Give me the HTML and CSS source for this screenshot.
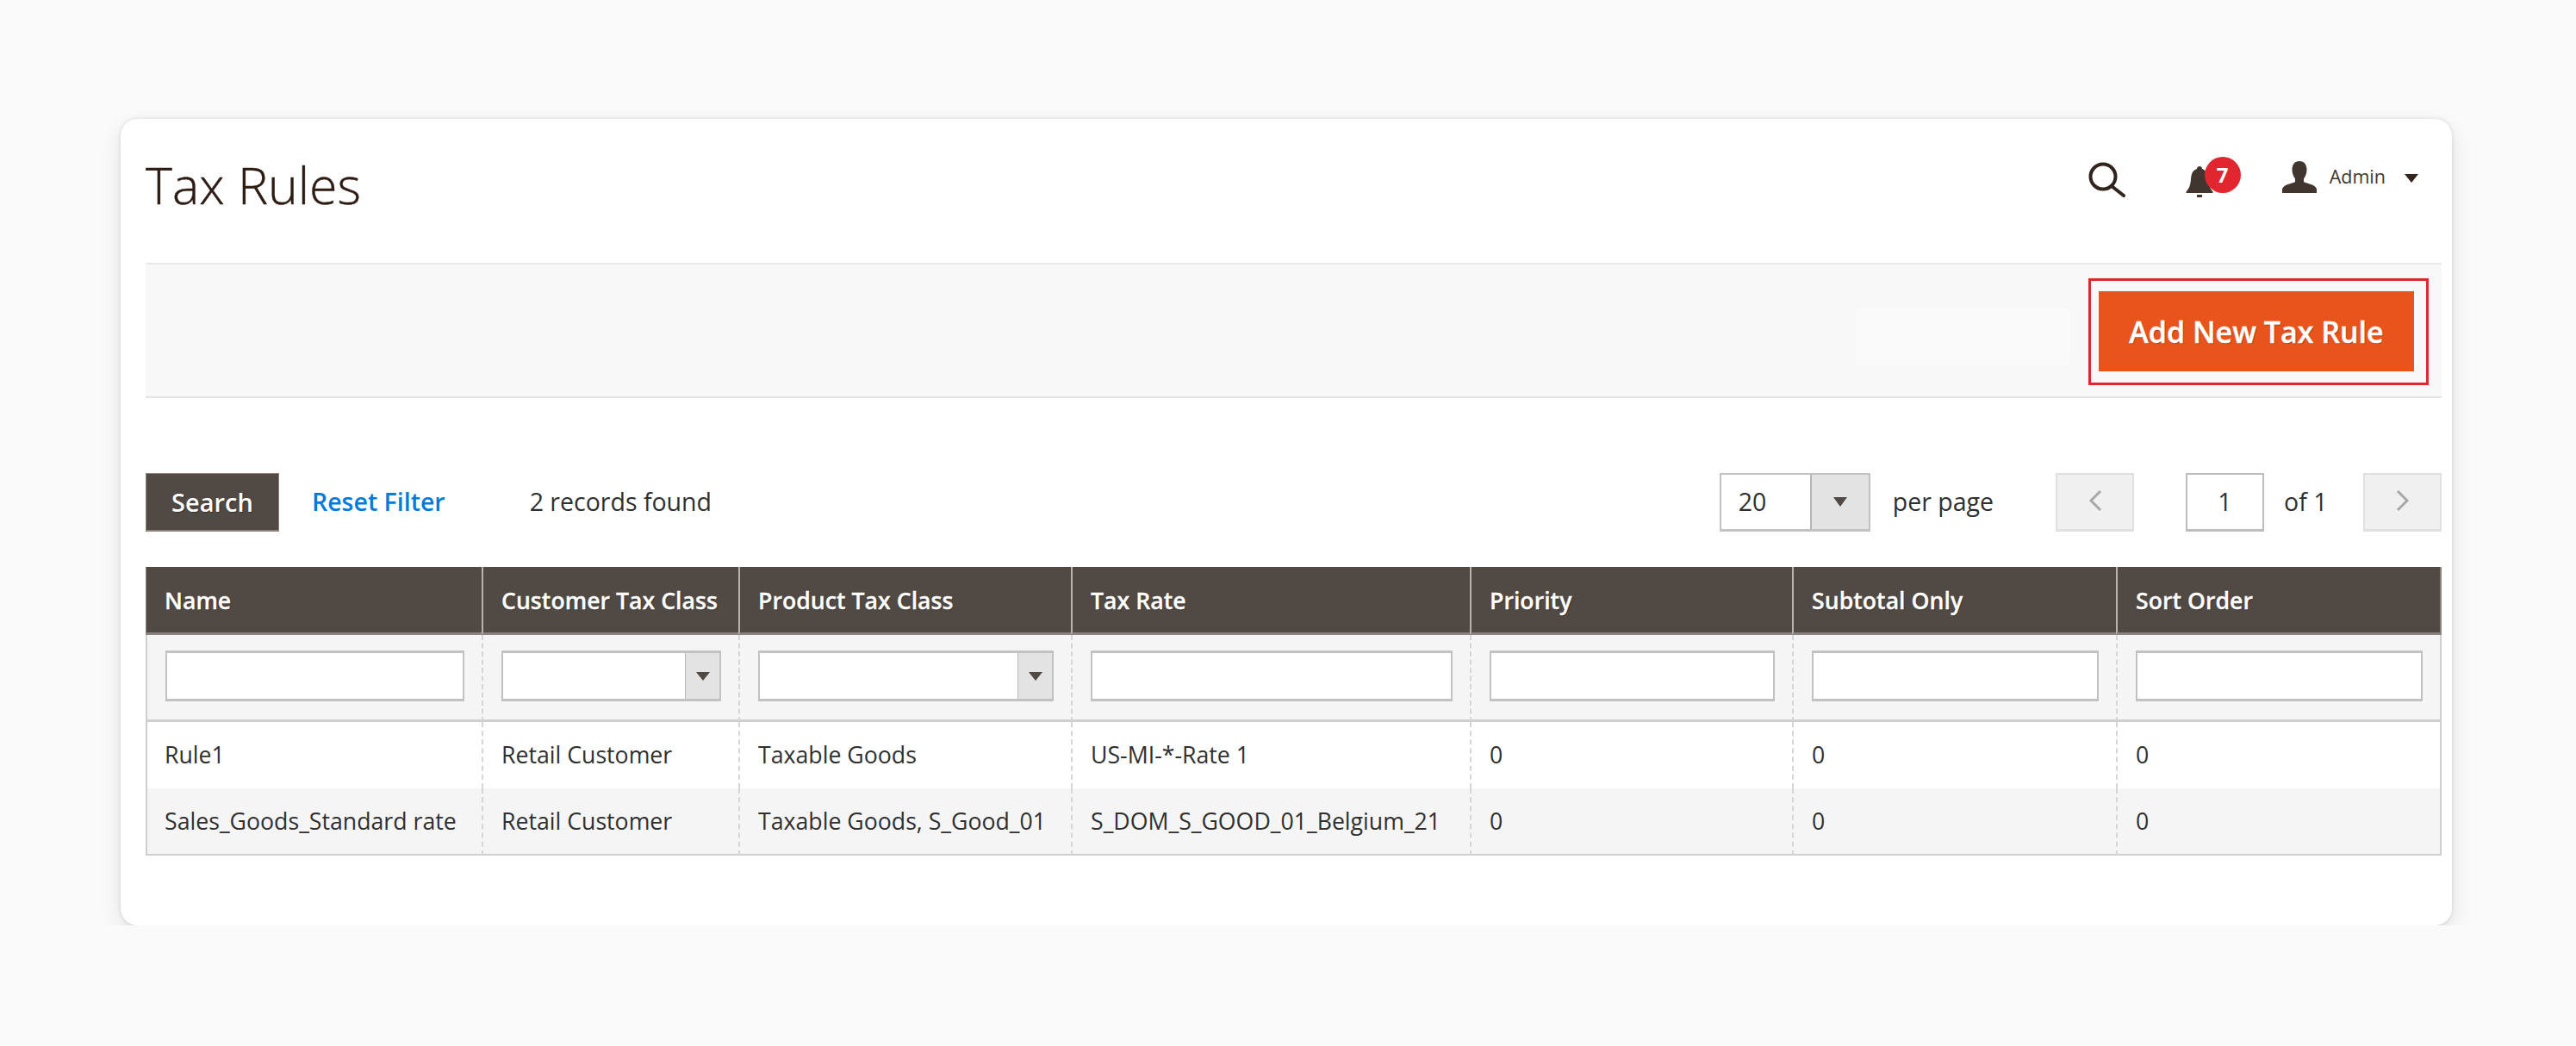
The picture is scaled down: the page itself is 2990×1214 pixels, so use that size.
FILE: index.html
```html
<!DOCTYPE html>
<html lang="en">
<head>
<meta charset="utf-8">
<title>Tax Rules</title>
<link rel="stylesheet" href="styles.css">
</head>
<body>
<main class="card">
  <header class="page-head">
    <h1 class="title">Tax Rules</h1>
    <div class="actions">
      <svg class="icon-search" viewBox="0 0 44 42" width="44" height="42"><circle cx="17" cy="18" r="14.5" fill="none" stroke="#2f241e" stroke-width="4"/><path d="M27 29 41 40" fill="none" stroke="#2f241e" stroke-width="4" stroke-linecap="round"/></svg>
      <div class="bell">
        <svg viewBox="0 0 32 36" width="32" height="36"><path d="M16 0c2 0 3 1.400 3 3 5 1.500 6.500 6 7 12 .5 6 1.500 10 5.500 14.500V31H.5v-1.500C4.500 25 5.500 21 6 15c.5-6 2-10.500 7-12 0-1.600 1-3 3-3Z" fill="#41362f"/><rect x="13" y="33" width="6" height="3" fill="#41362f"/></svg>
        <span class="badge">7</span>
      </div>
      <div class="user">
        <svg viewBox="0 0 40 37" width="40" height="37"><path d="M20 0c5.500 0 8.500 4 8.500 10 0 4-1.500 8-3.500 10.500V24c3 2 10 2.500 13.500 6 .8 1 1.500 1.500 1.500 3v4H0v-4c0-1.500.7-2 1.500-3C5 26.500 12 26 15 24v-3.500C13 18 11.500 14 11.500 10 11.500 4 14.500 0 20 0Z" fill="#41362f"/></svg>
        <span class="user-name">Admin</span>
        <span class="caret"></span>
      </div>
    </div>
  </header>

  <section class="toolbar">
    <div class="toolbar-ghost"></div>
    <div class="add-frame"><button class="add-btn" type="button">Add New Tax Rule</button></div>
  </section>

  <section class="grid-controls">
    <button class="search-btn" type="button">Search</button>
    <a class="reset-link" href="#">Reset Filter</a>
    <span class="records">2 records found</span>
    <div class="pager">
      <div class="per-select"><span class="per-value">20</span><span class="per-arrow"><i class="tri"></i></span></div>
      <span class="per-label">per page</span>
      <button class="page-nav page-prev" type="button" aria-label="Previous"><svg viewBox="0 0 16 26" width="16" height="26"><path d="M14 2 3 13l11 11" fill="none" stroke="#a8a8a8" stroke-width="3"/></svg></button>
      <div class="page-num">1</div>
      <span class="page-of">of 1</span>
      <button class="page-nav" type="button" aria-label="Next"><svg viewBox="0 0 16 26" width="16" height="26"><path d="m2 2 11 11L2 24" fill="none" stroke="#a8a8a8" stroke-width="3"/></svg></button>
    </div>
  </section>

  <table class="grid">
    <colgroup>
      <col class="c1"><col class="c2"><col class="c3"><col class="c4"><col class="c5"><col class="c6"><col class="c7">
    </colgroup>
    <thead>
      <tr class="heads">
        <th>Name</th><th>Customer Tax Class</th><th>Product Tax Class</th><th>Tax Rate</th><th>Priority</th><th>Subtotal Only</th><th>Sort Order</th>
      </tr>
      <tr class="filters">
        <td><div class="field"></div></td>
        <td><div class="field"><span class="field-arrow"><i class="tri tri-sm"></i></span></div></td>
        <td><div class="field"><span class="field-arrow"><i class="tri tri-sm"></i></span></div></td>
        <td><div class="field"></div></td>
        <td><div class="field"></div></td>
        <td><div class="field"></div></td>
        <td><div class="field"></div></td>
      </tr>
    </thead>
    <tbody>
      <tr class="row">
        <td>Rule1</td><td>Retail Customer</td><td>Taxable Goods</td><td>US-MI-*-Rate 1</td><td>0</td><td>0</td><td>0</td>
      </tr>
      <tr class="row row-alt">
        <td>Sales_Goods_Standard rate</td><td>Retail Customer</td><td>Taxable Goods, S_Good_01</td><td>S_DOM_S_GOOD_01_Belgium_21</td><td>0</td><td>0</td><td>0</td>
      </tr>
    </tbody>
  </table>
</main>
</body>
</html>
```

FILE: styles.css
```css
* { box-sizing: border-box; }
html, body { margin: 0; }
body {
  background: #fafafa;
  padding: 138px 144px 0 140px;
  font-family: "Open Sans", "Liberation Sans", sans-serif;
  color: #303030;
  font-size: 28.5px;
}
.card {
  height: 936px;
  padding: 0 12px 0 29px;
  background: #fff;
  border-radius: 20px;
  box-shadow: 0 10px 26px rgba(0, 0, 0, .1), 0 0 5px rgba(0, 0, 0, .12);
}
.page-head {
  height: 167px;
  display: flex;
  justify-content: space-between;
}
.title {
  margin: 40px 0 0;
  font-size: 59px;
  font-weight: 300;
  line-height: 72px;
  color: #2c1c14;
  -webkit-text-stroke: .4px #2c1c14;
}
.actions {
  display: flex;
  align-items: flex-start;
  padding: 49px 27px 0 0;
}
.icon-search { display: block; }
.bell {
  position: relative;
  width: 32px;
  height: 36px;
  margin: 6px 0 0 69px;
}
.bell svg { display: block; }
.badge {
  position: absolute;
  left: 22px;
  top: -11px;
  width: 42px;
  height: 42px;
  border-radius: 50%;
  background: #e22630;
  color: #fff;
  font-size: 24px;
  font-weight: 700;
  line-height: 42px;
  text-align: center;
}
.user {
  display: flex;
  align-items: flex-start;
  margin-left: 80px;
}
.user svg { display: block; }
.user-name {
  margin-left: 15px;
  font-size: 21.5px;
  line-height: 36px;
  color: #41362f;
}
.caret {
  width: 0;
  height: 0;
  margin: 15px 0 0 22px;
  border-left: 8px solid transparent;
  border-right: 8px solid transparent;
  border-top: 10px solid #33241c;
}
.toolbar {
  height: 157px;
  display: flex;
  align-items: center;
  justify-content: flex-end;
  padding: 0 15px 0 0;
  gap: 22px;
  background: #f8f8f8;
  border-top: 2px solid #e9e9e9;
  border-bottom: 2px solid #e3e3e3;
}
.toolbar-ghost {
  width: 247px;
  height: 65px;
  margin-top: 13px;
  background: #fafafa;
}
.add-frame {
  padding: 12px 14px 13px 9px;
  border: 3px solid #e22630;
  margin-top: 3px;
}
.add-btn {
  display: block;
  width: 366px;
  height: 93px;
  padding: 0;
  border: 0;
  background: #e8541c;
  color: #fff;
  font-family: inherit;
  font-size: 34px;
  font-weight: 600;
  text-shadow: 1px 1px 1px rgba(0, 0, 0, .3);
  -webkit-text-stroke: .4px #fff;
}
.grid-controls {
  display: flex;
  align-items: flex-start;
  height: 69px;
  margin-top: 87px;
}
.search-btn {
  width: 155px;
  height: 68px;
  padding: 0;
  border: 1px solid #8c837c;
  border-bottom-width: 2px;
  background: #514943;
  color: #fff;
  font-family: inherit;
  font-size: 29px;
  font-weight: 600;
  text-shadow: 1px 1px 1px rgba(0, 0, 0, .3);
}
.reset-link {
  margin-left: 38px;
  line-height: 66px;
  color: #007bdb;
  font-weight: 600;
  text-decoration: none;
}
.records {
  margin-left: 98px;
  line-height: 66px;
  color: #303030;
}
.pager {
  display: flex;
  align-items: flex-start;
  margin-left: auto;
}
.per-select {
  width: 175px;
  height: 68px;
  display: flex;
  border: 2px solid #c2c2c2;
  border-bottom-width: 3px;
  background: #fff;
}
.per-value {
  width: 103px;
  padding-left: 20px;
  line-height: 62px;
}
.per-arrow {
  flex: 1;
  display: flex;
  align-items: center;
  justify-content: center;
  background: #e3e3e3;
  border-left: 2px solid #b5b5b5;
}
.tri {
  display: block;
  width: 0;
  height: 0;
  border-left: 8px solid transparent;
  border-right: 8px solid transparent;
  border-top: 11px solid #514943;
}
.tri-sm {
  border-top-width: 10px;
}
.per-label {
  margin-left: 26px;
  line-height: 66px;
}
.page-nav {
  width: 91px;
  height: 68px;
  padding: 0;
  display: flex;
  align-items: center;
  justify-content: center;
  border: 2px solid #e0e0e0;
  border-bottom-width: 3px;
  background: #f0f0f0;
}
.page-nav svg { display: block; margin-top: -4px; }
.page-prev { margin-left: 72px; }
.page-num {
  width: 91px;
  height: 68px;
  margin-left: 60px;
  border: 2px solid #bdbdbd;
  border-bottom-width: 3px;
  background: #fff;
  text-align: center;
  line-height: 62px;
}
.page-of {
  width: 115px;
  padding-left: 23px;
  line-height: 66px;
}
.grid {
  width: 2665px;
  margin-top: 40px;
  border-collapse: separate;
  border-spacing: 0;
  table-layout: fixed;
  font-size: 26.7px;
}
.c1 { width: 390px; }
.c2 { width: 298px; }
.c3 { width: 386px; }
.c4 { width: 463px; }
.c5 { width: 374px; }
.c6 { width: 376px; }
.c7 { width: 378px; }
.heads th {
  height: 79px;
  padding: 0 0 0 21px;
  background: #514943;
  color: #fff;
  font-size: 26.7px;
  font-weight: 600;
  text-align: left;
  text-shadow: 1px 1px 1px rgba(0, 0, 0, .3);
  -webkit-text-stroke: .3px #fff;
  white-space: nowrap;
  border-left: 2px solid #b8b3af;
  border-bottom: 3px solid #8a837f;
}
.heads th:first-child { border-left: 1px solid #8a837f; }
.heads th:last-child { border-right: 2px solid #8a837f; }
.filters td {
  height: 101px;
  padding: 18px 20px 0 21px;
  vertical-align: top;
  background: #f5f5f5;
  border-left: 2px dashed #d6d6d6;
  border-bottom: 3px solid #cfcfcf;
}
.filters td:first-child { border-left: 2px solid #cfcfcf; }
.filters td:last-child { border-right: 2px solid #cfcfcf; }
.field {
  display: flex;
  justify-content: flex-end;
  height: 59px;
  background: #fff;
  border: 2px solid #c2c2c2;
  border-top-width: 3px;
  border-bottom-width: 3px;
}
.field-arrow {
  width: 40px;
  display: flex;
  align-items: center;
  justify-content: center;
  background: #e3e3e3;
  border-left: 1px solid #b9b9b9;
}
.row td {
  height: 77px;
  padding: 0 0 2px 21px;
  color: #303030;
  background: #fff;
  white-space: nowrap;
  border-left: 2px dashed #d6d6d6;
}
.row td:first-child { border-left: 2px solid #cfcfcf; padding-left: 20px; }
.row td:last-child { border-right: 2px solid #cfcfcf; }
.row-alt td {
  height: 78px;
  background: #f5f5f5;
  border-bottom: 2px solid #cfcfcf;
}
```
